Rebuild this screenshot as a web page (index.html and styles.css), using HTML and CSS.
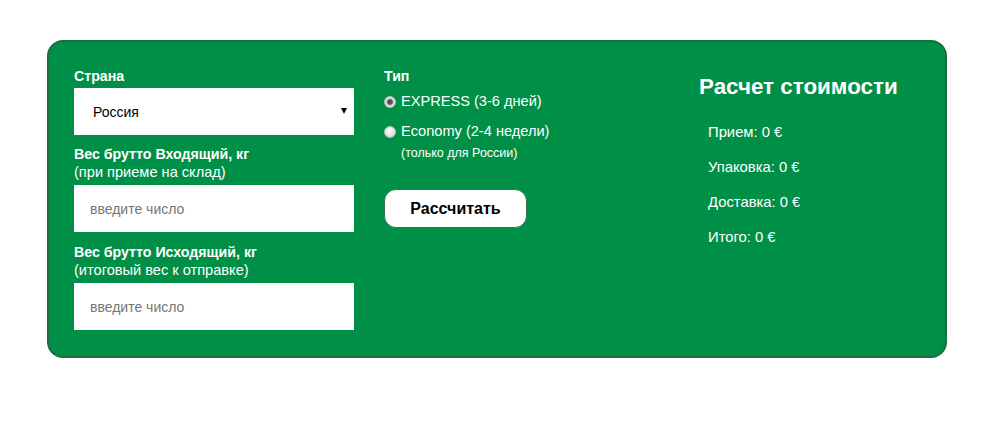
FILE: index.html
```html
<!DOCTYPE html>
<html lang="ru">
<head>
<meta charset="utf-8">
<title>Калькулятор доставки</title>
<link rel="stylesheet" href="styles.css">
</head>
<body>
<div class="calc">
  <form class="calc-form">
    <div class="col col-fields">
      <label class="label" for="country">Страна</label>
      <div class="select-wrap">
        <select id="country" class="field select">
          <option>Россия</option>
        </select>
      </div>

      <label class="label label-gap" for="w-in">Вес брутто Входящий, кг</label>
      <span class="hint">(при приеме на склад)</span>
      <input id="w-in" class="field input" type="text" placeholder="введите число">

      <label class="label label-gap label-gap-wide" for="w-out">Вес брутто Исходящий, кг</label>
      <span class="hint">(итоговый вес к отправке)</span>
      <input id="w-out" class="field input" type="text" placeholder="введите число">
    </div>

    <div class="col col-type">
      <span class="label">Тип</span>
      <label class="radio-row">
        <input class="radio" type="radio" name="type" checked>
        <span>EXPRESS (3-6 дней)</span>
      </label>
      <label class="radio-row radio-row-second">
        <input class="radio" type="radio" name="type">
        <span>Economy (2-4 недели)</span>
      </label>
      <span class="note">(только для России)</span>
      <button class="btn" type="button">Рассчитать</button>
    </div>

    <div class="col col-result">
      <h2 class="result-title">Расчет стоимости</h2>
      <ul class="result-list">
        <li>Прием: 0 €</li>
        <li>Упаковка: 0 €</li>
        <li>Доставка: 0 €</li>
        <li>Итого: 0 €</li>
      </ul>
    </div>
  </form>
</div>
</body>
</html>
```

FILE: styles.css
```css
html, body {
  margin: 0;
  padding: 0;
  background: #ffffff;
  font-family: "Liberation Sans", Arial, sans-serif;
}

.calc {
  box-sizing: border-box;
  width: 900px;
  height: 318px;
  margin: 40px 0 0 47px;
  background: #008f47;
  border: 2px solid #1d6b45;
  border-radius: 16px;
  color: #ffffff;
}

.calc-form {
  display: flex;
  padding: 26px 0 0 25px;
}

.col {
  display: flex;
  flex-direction: column;
  flex-shrink: 0;
}

.col-fields {
  width: 280px;
}

.col-type {
  width: 296px;
  margin-left: 30px;
  align-items: flex-start;
}

.col-result {
  width: 230px;
  margin-left: 19px;
}

.label {
  font-size: 14.2px;
  font-weight: bold;
  line-height: 17px;
}

.label-gap {
  margin-top: 11px;
}

.label-gap-wide {
  margin-top: 12px;
}

.hint {
  font-size: 14.6px;
  line-height: 19px;
}

.field {
  box-sizing: border-box;
  width: 280px;
  height: 47px;
  border: none;
  border-radius: 0;
  background: #ffffff;
  font-family: "Liberation Sans", Arial, sans-serif;
  font-size: 14px;
  color: #000000;
  outline: none;
}

.select-wrap {
  position: relative;
  margin-top: 3px;
}

.select {
  appearance: none;
  -webkit-appearance: none;
  padding: 0 0 0 19px;
  display: block;
}

/* dropdown arrow */
.select-wrap::after {
  content: "";
  position: absolute;
  right: 7px;
  top: 20px;
  border-left: 3px solid transparent;
  border-right: 3px solid transparent;
  border-top: 6px solid #000000;
  pointer-events: none;
}

.input {
  margin-top: 3px;
  padding: 0 16px;
}

.input::placeholder {
  color: #757575;
}

.radio-row {
  display: flex;
  align-items: center;
  margin-top: 7px;
  font-size: 14.6px;
  line-height: 19px;
}

.radio-row-second {
  margin-top: 11px;
}

.radio {
  appearance: none;
  -webkit-appearance: none;
  width: 12px;
  height: 12px;
  margin: 0 5px 0 0;
  border-radius: 50%;
  border: 1px solid #b9c2bc;
  background: radial-gradient(circle at 45% 40%, #ffffff 0%, #e2e2e2 60%, #c9c9c9 100%);
  box-sizing: border-box;
}

.radio:checked {
  background: radial-gradient(circle, #555555 0 2.5px, #d9d9d9 3.2px, #e6e6e6 100%);
}

.note {
  margin: 5px 0 0 17px;
  font-size: 12.5px;
  line-height: 15px;
}

.btn {
  box-sizing: border-box;
  margin-top: 28px;
  width: 143px;
  height: 39px;
  background: #ffffff;
  border: 1px solid #2a7a52;
  border-radius: 12px;
  font-family: "Liberation Sans", Arial, sans-serif;
  font-size: 16px;
  font-weight: bold;
  color: #000000;
  padding: 0;
}

.result-title {
  margin: 6px 0 0 0;
  font-size: 22.4px;
  font-weight: bold;
  line-height: 26px;
}

.result-list {
  list-style: none;
  margin: 0;
  padding: 23px 0 0 9px;
  font-size: 14.8px;
  line-height: 18px;
}

.result-list li + li {
  margin-top: 17px;
}
```
